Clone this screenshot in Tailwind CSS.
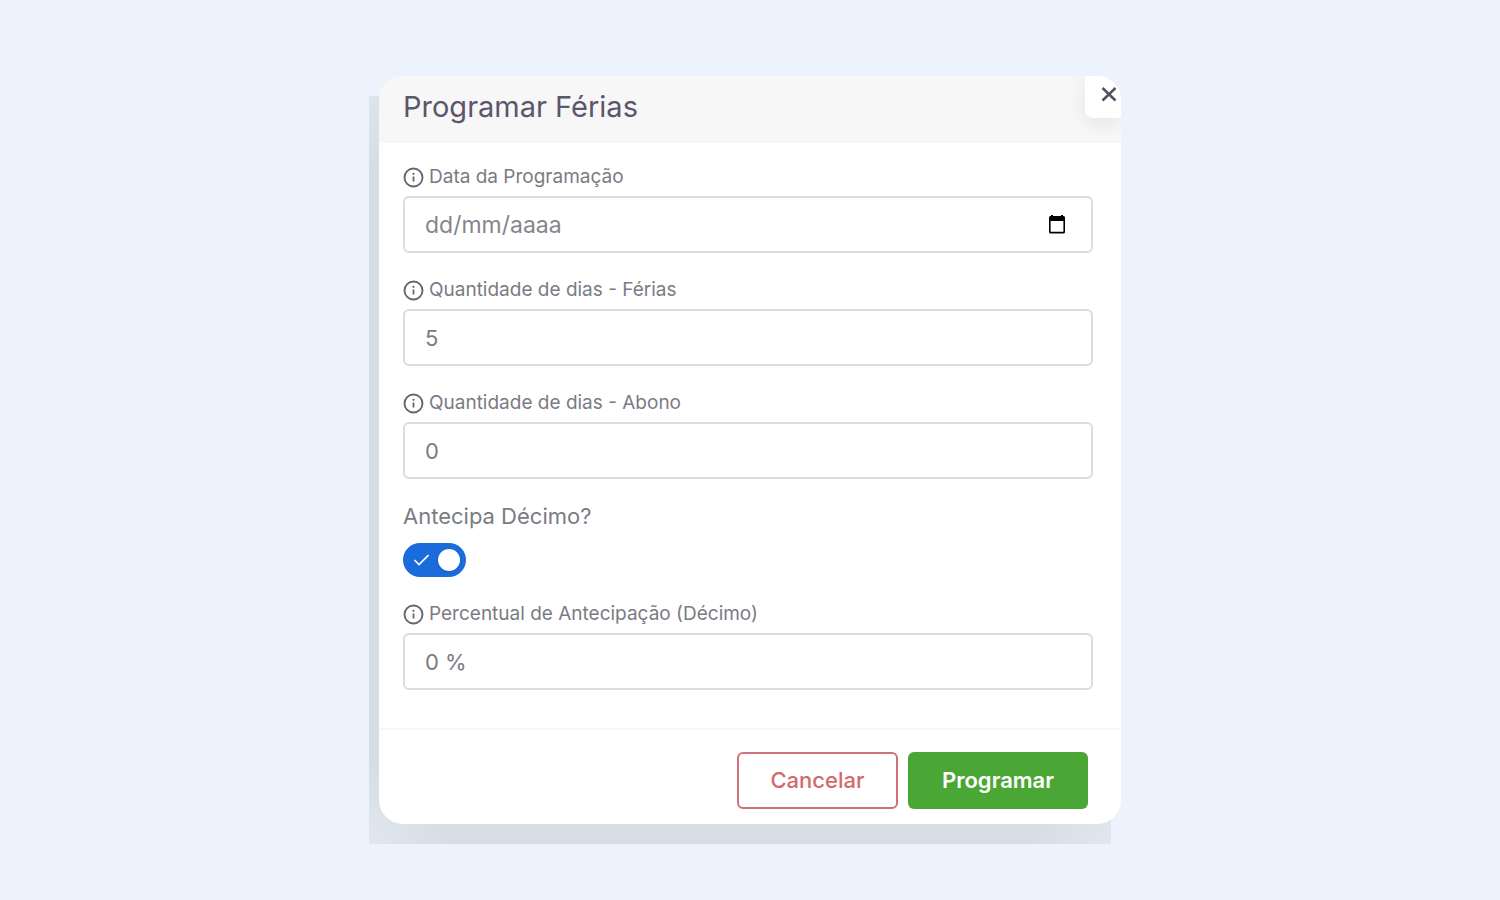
<!DOCTYPE html>
<html lang="pt-BR">
<head>
  <meta charset="UTF-8">
  <meta name="viewport" content="width=device-width, initial-scale=1.0">
  <title>Programar Férias</title>
  <script src="https://cdn.jsdelivr.net/npm/@tailwindcss/browser@4"></script>
</head>
<body class="min-h-screen flex items-center justify-center bg-[#ecf3fc] font-['Inter','Liberation_Sans',sans-serif] text-[#7b7b83]">
  <!-- Info icon -->
  <svg class="hidden">
    <symbol id="info" viewBox="0 0 22 22">
      <circle cx="10.500" cy="11.500" r="9" fill="none" stroke="currentColor" stroke-width="1.9" />
      <path d="M10.500 10.500v5" stroke="currentColor" stroke-width="1.8" fill="none" />
      <circle cx="10.500" cy="7.800" r="1.1" fill="currentColor" />
    </symbol>
  </svg>

  <div class="relative w-full max-w-[742px]">
    <!-- Shadow -->
    <div class="absolute top-5 -left-2.5 w-full h-full bg-[#d6dde5] bg-[radial-gradient(circle_at_0_0,#dde4ec,transparent_70px),radial-gradient(circle_at_0_100%,#e0e7ef,transparent_80px),radial-gradient(circle_at_100%_100%,#e0e7ef,transparent_80px)]"></div>

    <form id="vacation-form" class="relative bg-white rounded-3xl overflow-hidden">
      <!-- Header -->
      <header class="flex items-start justify-between bg-[#f7f7f7] h-[67px] pl-6">
        <h1 class="text-[29px] leading-[62px] text-[#5b566b]">Programar Férias</h1>
        <button type="button" aria-label="Fechar" class="flex items-center justify-end w-9 h-[42px] pb-1.5 pr-1 bg-white rounded-bl-lg shadow-[0_5px_20px_rgba(0,0,0,0.08)]">
          <svg class="w-4 h-4 text-[#55505f]" viewBox="0 0 16 16" fill="none" stroke="currentColor" stroke-width="2.5"><path d="M1.500 2l13 12.500M14.500 2l-13 12.500" /></svg>
        </button>
      </header>

      <!-- Fields -->
      <div class="flex flex-col gap-[25px] pt-[22px] pb-[38px] pl-6 pr-7">
        <div class="flex flex-col gap-[7px]">
          <label for="date" class="flex items-center gap-1 h-6 text-[19px]">
            <svg class="w-[22px] h-[22px] text-[#65656d]"><use href="#info" /></svg>Data da Programação
          </label>
          <div class="flex items-center h-[57px] border-2 border-[#dcdce0] rounded-md pr-6">
            <input type="text" id="date" name="date" placeholder="dd/mm/aaaa" class="flex-1 h-full px-5 text-[23px] outline-none placeholder:text-[#85858b]">
            <button type="button" aria-label="Abrir calendário">
              <svg class="w-5 h-5 text-black" viewBox="0 0 20 20"><path fill="currentColor" fill-rule="evenodd" d="M4 0h2v1h8V0h2v1h.5q1.500 0 1.500 1.500v14.500q0 1.500-1.500 1.500h-13q-1.500 0-1.500-1.500V2.500Q2 1 3.500 1H4zM3.600 6v10.800h12.800V6z" /></svg>
            </button>
          </div>
        </div>

        <div class="flex flex-col gap-[7px]">
          <label for="days" class="flex items-center gap-1 h-6 text-[19px]">
            <svg class="w-[22px] h-[22px] text-[#65656d]"><use href="#info" /></svg>Quantidade de dias - Férias
          </label>
          <input type="text" id="days" name="days" value="5" class="h-[57px] border-2 border-[#dcdce0] rounded-md px-5 text-[22px]">
        </div>

        <div class="flex flex-col gap-[7px]">
          <label for="bonus" class="flex items-center gap-1 h-6 text-[19px]">
            <svg class="w-[22px] h-[22px] text-[#65656d]"><use href="#info" /></svg>Quantidade de dias - Abono
          </label>
          <input type="text" id="bonus" name="bonus" value="0" class="h-[57px] border-2 border-[#dcdce0] rounded-md px-5 text-[22px]">
        </div>

        <div class="flex flex-col items-start gap-[15px]">
          <label for="advance" class="flex items-center h-6 text-[22px]">Antecipa Décimo?</label>
          <div class="relative w-[63px] h-[34px]">
            <input type="checkbox" id="advance" name="advance" checked class="peer appearance-none block w-full h-full rounded-full bg-gray-300 checked:bg-[#1a6bdc]">
            <svg class="absolute left-2.5 top-2 w-4 h-4 text-white pointer-events-none" viewBox="0 0 16 16" fill="none" stroke="currentColor" stroke-width="1.6"><path d="M1.500 9l4.500 4.500L15.500 4" /></svg>
            <span class="absolute left-1.5 top-1.5 peer-checked:left-auto peer-checked:right-1.5 w-[22px] h-[22px] rounded-full bg-white shadow pointer-events-none"></span>
          </div>
        </div>

        <div class="flex flex-col gap-[7px]">
          <label for="percent" class="flex items-center gap-1 h-6 text-[19px]">
            <svg class="w-[22px] h-[22px] text-[#65656d]"><use href="#info" /></svg>Percentual de Antecipação (Décimo)
          </label>
          <input type="text" id="percent" name="percent" value="0 %" class="h-[57px] border-2 border-[#dcdce0] rounded-md px-5 text-[22px]">
        </div>
      </div>

      <!-- Footer -->
      <footer class="flex justify-end gap-2.5 border-t-2 border-[#f6f6f6] pt-[22px] pb-[15px] pr-[33px]">
        <button type="button" class="w-[161px] h-[57px] border-2 border-[#d07078] rounded-md text-[22px] font-medium text-[#d26a6c]">Cancelar</button>
        <button type="submit" class="w-[180px] h-[57px] rounded-md bg-[#4ba735] text-[22px] font-semibold text-white">Programar</button>
      </footer>
    </form>
  </div>

  <script>
    document.getElementById("vacation-form").addEventListener("submit", function (event) {
      event.preventDefault();
    });
  </script>
</body>
</html>
